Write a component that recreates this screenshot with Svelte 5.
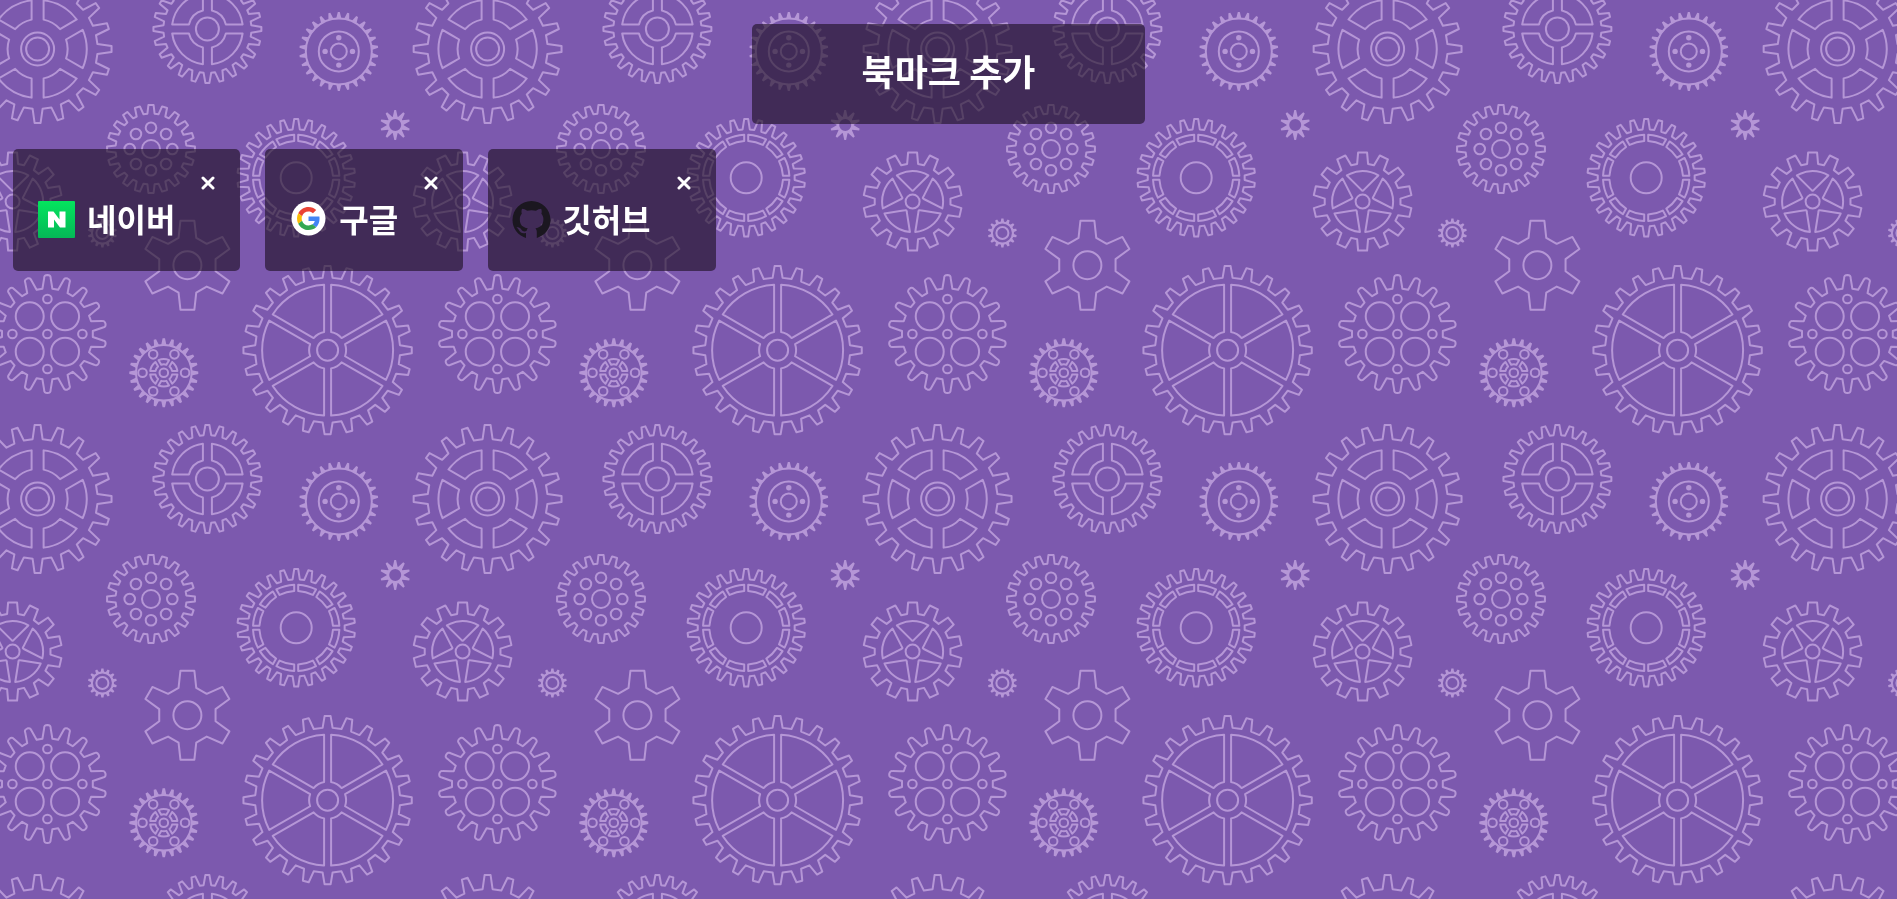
<script>
  const TILE = 450;

  const polar = (r, a) => {
    const t = ((a - 90) * Math.PI) / 180;
    return `${(r * Math.cos(t)).toFixed(2)} ${(r * Math.sin(t)).toFixed(2)}`;
  };
  const deg = (x) => (x * 180) / Math.PI;

  // Outline of a toothed wheel: n teeth, tip/root radii, half widths of a tooth at its tip and base.
  function wheel(n, tip, root, tipHalf, baseHalf, round = false) {
    const ta = deg(tipHalf / tip);
    const ba = deg(baseHalf / root);
    let d = '';
    for (let i = 0; i < n; i++) {
      const c = (i * 360) / n;
      d += `${i ? 'L' : 'M'}${polar(root, c - ba)}L${polar(tip - (round ? 3 : 0), c - ta)}`;
      d += round
        ? `Q${polar(tip, c - ta)} ${polar(tip, c)}Q${polar(tip, c + ta)} ${polar(tip - 3, c + ta)}`
        : `L${polar(tip, c + ta)}`;
      d += `L${polar(root, c + ba)}`;
    }
    return d + 'Z';
  }

  // Openings between n spokes of the given half width, the first spoke at the angle `start`.
  function openings(n, outer, inner, half, start = 0) {
    const oa = deg(Math.asin(half / outer));
    const ia = deg(Math.asin(half / inner));
    let d = '';
    for (let i = 0; i < n; i++) {
      const a = start + (i * 360) / n;
      const b = a + 360 / n;
      d += `M${polar(outer, a + oa)}A${outer} ${outer} 0 0 1 ${polar(outer, b - oa)}`;
      d += `L${polar(inner, b - ia)}A${inner} ${inner} 0 0 0 ${polar(inner, a + ia)}Z`;
    }
    return d;
  }

  function wedges() {
    let d = '';
    for (let i = 0; i < 5; i++) {
      const a = i * 72;
      d += `M${polar(30.5, a - 31)}A30.5 30.5 0 0 1 ${polar(30.5, a + 31)}L${polar(11.5, a + 5)}Q${polar(10, a)} ${polar(11.5, a - 5)}Z`;
    }
    return d;
  }

  const ring = (n, dist, r, start = 0) =>
    Array.from({ length: n }, (_, i) => {
      const [x, y] = polar(dist, start + (i * 360) / n).split(' ');
      return { x, y, r };
    });
  const hub = (...radii) => radii.map((r) => ({ x: 0, y: 0, r }));

  const gears = [
    { x: 37.6, y: 49, d: wheel(20, 74, 60, 3, 5) + openings(6, 49, 30, 6), holes: hub(16.5, 11.5) },
    { x: 207.4, y: 29, d: wheel(24, 54, 44, 2, 3.8) + openings(4, 35.5, 19, 4.5), holes: hub(11.5) },
    { x: 338.8, y: 51.4, solid: wheel(26, 39.5, 33, 1, 2.6), holes: hub(33, 20, 8), dots: ring(4, 13.7, 2.7) },
    { x: 151, y: 149, d: wheel(20, 44, 35.5, 2.6, 3.6), holes: [...hub(9), ...ring(8, 21.3, 5.3)] },
    { x: 296.2, y: 177.8, d: wheel(26, 58.8, 48.5, 2, 3.6) + openings(12, 43.2, 36.8, 2), holes: hub(15.5) },
    { x: 395.2, y: 125, solid: wheel(10, 15, 8.5, 0.9, 2.4), holes: hub(7) },
    { x: 12.6, y: 201.6, d: wheel(14, 49.2, 38, 4.5, 5.5) + wedges(), holes: hub(7) },
    { x: 102.4, y: 233, solid: wheel(14, 14.5, 11, 1.1, 1.7), holes: hub(10.5, 6) },
    { x: 47.4, y: 334, d: wheel(18, 59, 45.5, 3.4, 5, true), holes: [...hub(4.3), ...ring(4, 35, 4.3), ...ring(4, 25, 14, 45)] },
    { x: 187.4, y: 265.2, d: wheel(6, 45, 28.8, 7, 9), holes: hub(14) },
    { x: 163.8, y: 372.8, solid: wheel(24, 34.5, 28, 1.2, 2.6), d: openings(6, 13.7, 8.5, 1.8, 30), holes: [...hub(27.8, 4.3), ...ring(6, 21.3, 4.3, 30)] },
    { x: 327.6, y: 350.2, d: wheel(24, 84.2, 72.5, 3, 5) + openings(6, 65.5, 18.5, 3.5), holes: hub(10.5) }
  ];
  const shifts = [-TILE, 0, TILE];

  let bookmarks = $state([
    { name: '네이버', icon: 'naver' },
    { name: '구글', icon: 'google' },
    { name: '깃허브', icon: 'github' }
  ]);
  const remove = (name) => (bookmarks = bookmarks.filter((b) => b.name !== name));
</script>

<svg class="backdrop" aria-hidden="true">
  <defs>
    <g id="gears">
      {#each gears as g}
        <g transform="translate({g.x} {g.y})">
          {#if g.d}<path d={g.d} />{/if}
          {#each g.holes as h}<circle cx={h.x} cy={h.y} r={h.r} />{/each}
          {#each g.dots ?? [] as h}<circle class="solid" cx={h.x} cy={h.y} r={h.r} />{/each}
          {#if g.solid}
            <path class="solid" fill-rule="evenodd" d="{g.solid}M0 {-g.holes[0].r}a{g.holes[0].r} {g.holes[0].r} 0 1 0 .01 0Z" />
          {/if}
        </g>
      {/each}
    </g>
    <pattern id="tile" width={TILE} height={TILE} patternUnits="userSpaceOnUse">
      {#each shifts as sx}
        {#each shifts as sy}<use href="#gears" x={sx} y={sy} />{/each}
      {/each}
    </pattern>
  </defs>
  <rect class="sheet" width="100%" height="100%" fill="url(#tile)" />
</svg>

<main>
  <button class="add" type="button">북마크 추가</button>

  <ul>
    {#each bookmarks as b (b.name)}
      <li>
        <button class="close" type="button" aria-label="{b.name} 삭제" onclick={() => remove(b.name)}>
          <svg viewBox="0 0 14 14" width="14" height="14"><path d="M2 2l10 10M12 2L2 12" /></svg>
        </button>
        <a href="#{b.icon}">
          {#if b.icon === 'naver'}
            <svg class="icon" viewBox="0 0 37 37">
              <defs>
                <linearGradient id="green" x1="0" y1="0" x2="0" y2="1">
                  <stop offset="0" stop-color="#04e45e" /><stop offset="1" stop-color="#05b857" />
                </linearGradient>
              </defs>
              <rect width="37" height="37" rx="1" fill="url(#green)" />
              <path fill="#fff" d="M10 10.500h5.500l6 8v-8h6v16h-5.500l-6-8v8h-6z" />
            </svg>
          {:else if b.icon === 'google'}
            <svg class="icon" viewBox="0 0 37 37">
              <circle cx="18.500" cy="17.500" r="17" fill="#fff" />
              <g transform="translate(7 6) scale(.48)">
                <path fill="#EA4335" d="M24 9.5c3.54 0 6.71 1.22 9.21 3.6l6.85-6.85C35.9 2.38 30.47 0 24 0 14.62 0 6.51 5.38 2.56 13.22l7.98 6.19C12.43 13.72 17.74 9.5 24 9.5z" />
                <path fill="#4285F4" d="M46.98 24.55c0-1.57-.15-3.09-.38-4.55H24v9.02h12.94c-.58 2.96-2.26 5.48-4.78 7.18l7.73 6c4.51-4.18 7.09-10.36 7.09-17.65z" />
                <path fill="#FBBC05" d="M10.53 28.59c-.48-1.45-.76-2.99-.76-4.59s.27-3.14.76-4.59l-7.98-6.19C.92 16.46 0 20.12 0 24c0 3.88.92 7.54 2.56 10.78l7.97-6.19z" />
                <path fill="#34A853" d="M24 48c6.48 0 11.93-2.13 15.89-5.81l-7.73-6c-2.15 1.45-4.92 2.3-8.16 2.3-6.26 0-11.57-4.22-13.47-9.91l-7.98 6.19C6.51 42.62 14.62 48 24 48z" />
              </g>
            </svg>
          {:else}
            <svg class="icon" viewBox="0 0 37 37">
              <path fill="#1b1720" d="M13 37v-5c-4 1-6-.5-7.500-3.500C5 27.500 4 27 3.500 26.500c2-.8 4 .5 5 2.300 1.200 1.800 3 2 5 1.200.2-1.300.6-2.200 1.300-2.800-5-.7-8-3.200-8-9 0-2.200.7-4 2-5.400-.5-1.500-.4-3.300.2-5 1.800 0 3.500.8 5.200 2 2.800-.7 6-.7 8.800 0 1.700-1.200 3.400-2 5.200-2 .6 1.700.7 3.500.2 5 1.300 1.400 2 3.200 2 5.400 0 5.800-3 8.300-8 9 .9.8 1.400 2.200 1.400 4V37C32 34.500 37.500 27.500 37.500 19 37.500 8.500 29 0 18.500 0S-.5 8.500-.5 19c0 8.500 5.500 15.500 13.500 18z" />
            </svg>
          {/if}
          <span>{b.name}</span>
        </a>
      </li>
    {/each}
  </ul>
</main>

<style>
  :global(body) {
    margin: 0;
    background: #7c59ae;
    font-family: 'Noto Sans CJK KR', sans-serif;
  }
  .backdrop {
    position: fixed;
    inset: 0;
    width: 100%;
    height: 100%;
    z-index: -1;
    fill: none;
    stroke: #b596d6;
    stroke-width: 2;
    stroke-linejoin: round;
  }
  .sheet {
    stroke: none;
  }
  .solid {
    fill: #b596d6;
    stroke: none;
  }
  main {
    display: flex;
    flex-direction: column;
    align-items: center;
    gap: 25px;
    padding: 24px 13px;
    color: #fff;
  }
  button {
    border: 0;
    color: inherit;
    font: inherit;
    cursor: pointer;
  }
  .add {
    width: 393px;
    max-width: 100%;
    height: 100px;
    padding: 0 0 8px;
    border-radius: 5px;
    background: rgba(29, 15, 34, 0.62);
    font-size: 36px;
    font-weight: 700;
    line-height: 48px;
  }
  ul {
    align-self: stretch;
    display: flex;
    flex-wrap: wrap;
    gap: 25px;
    margin: 0;
    padding: 0;
    list-style: none;
  }
  li {
    display: flex;
    flex-direction: column;
    padding: 25px;
    border-radius: 5px;
    background: rgba(29, 15, 34, 0.62);
  }
  .close {
    align-self: flex-end;
    display: flex;
    padding: 2px 0;
    background: none;
  }
  .close path {
    fill: none;
    stroke: #fff;
    stroke-width: 3;
    stroke-linecap: round;
  }
  a {
    display: flex;
    align-items: center;
    gap: 12px;
    padding: 5px 40px 5px 0;
    color: inherit;
    font-size: 32px;
    font-weight: 700;
    line-height: 44px;
    text-decoration: none;
  }
  span {
    padding-bottom: 2px;
    line-height: 42px;
  }
  .icon {
    width: 37px;
    height: 37px;
    overflow: visible;
  }
</style>
